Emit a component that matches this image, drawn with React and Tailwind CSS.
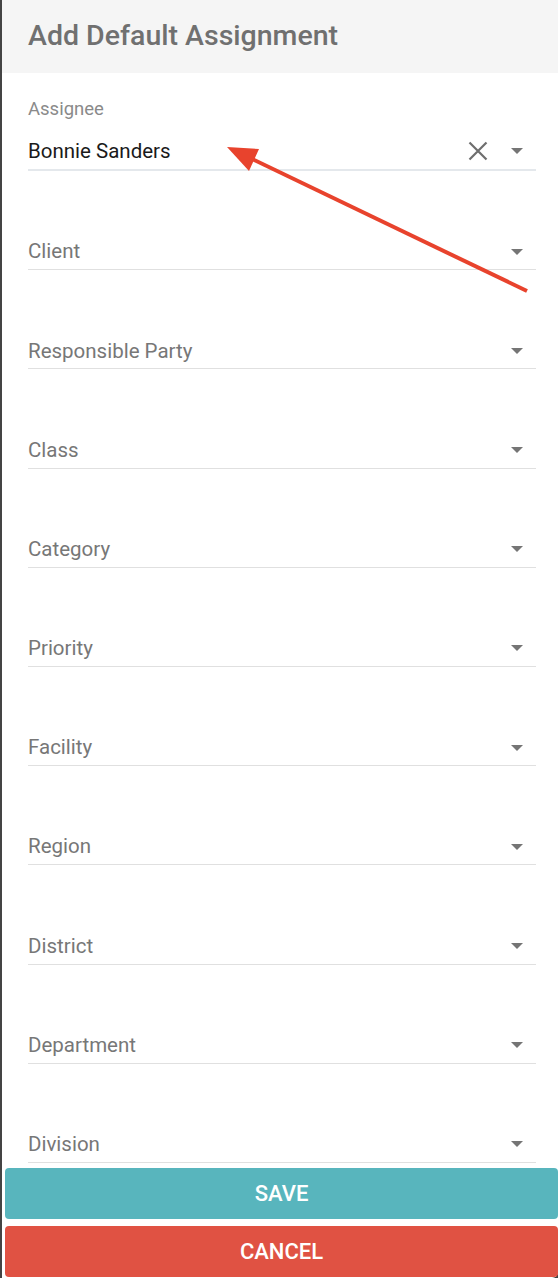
const FIELDS = [
  'Client',
  'Responsible Party',
  'Class',
  'Category',
  'Priority',
  'Facility',
  'Region',
  'District',
  'Department',
  'Division',
]

function Caret() {
  return (
    <svg width="12" height="6" viewBox="0 0 12 6" className="shrink-0">
      <path d="M0 0 L12 0 L6 6 Z" fill="#757575" />
    </svg>
  )
}

function ClearIcon() {
  return (
    <svg width="20" height="20" viewBox="0 0 20 20" className="shrink-0 mr-[23px]">
      <path d="M1.5 1.5 L18.5 18.5 M18.5 1.5 L1.5 18.5" stroke="#6e6e6e" strokeWidth="2.2" />
    </svg>
  )
}

function SelectField({ label }) {
  return (
    <div className="h-[99.2px] flex flex-col justify-end">
      <div className="h-[36px] flex items-center border-b border-[#e0e0e0] pr-[13px]">
        <span className="flex-1 text-[20.5px] text-[#777]">{label}</span>
        <Caret />
      </div>
    </div>
  )
}

export default function App() {
  return (
    <div
      className="relative w-[558px] h-[1278px] bg-[#444] overflow-hidden"
      style={{ fontFamily: 'Roboto, "Liberation Sans", sans-serif' }}
    >
      <div className="ml-[2px] h-full bg-white rounded-br-[6px] flex flex-col">
        <div className="h-[73px] bg-[#f5f5f5] pl-[26px] flex items-center">
          <h1 className="text-[28.5px] font-medium text-[#707070]">
            Add Default Assignment
          </h1>
        </div>

        <div className="pl-[26px] pr-[22px] pt-[26px]">
          <div className="text-[18.5px] leading-[20px] text-[#8a8a8a]">Assignee</div>
          <div className="mt-[14px] h-[38px] flex items-center border-b-2 border-[#e4e8ec] pr-[13px]">
            <span className="flex-1 text-[20.5px] text-[#1a1a1a]">Bonnie Sanders</span>
            <ClearIcon />
            <Caret />
          </div>
          {FIELDS.map((f) => (
            <SelectField key={f} label={f} />
          ))}
        </div>

        <div className="ml-[3px] mt-[5px] flex flex-col gap-[7px]">
          <button className="h-[51px] w-full rounded-[4px] bg-[#58b5bd] text-white text-[22px] font-medium">
            SAVE
          </button>
          <button className="h-[51px] w-full rounded-[4px] bg-[#e05243] text-white text-[22px] font-medium">
            CANCEL
          </button>
        </div>
      </div>

      <svg
        className="absolute left-0 top-0 pointer-events-none"
        width="558"
        height="1278"
      >
        <line x1="527" y1="291" x2="248" y2="157" stroke="#e8432d" strokeWidth="4" />
        <path d="M227 147 L259 149 L249 171 Z" fill="#e8432d" />
      </svg>
    </div>
  )
}
